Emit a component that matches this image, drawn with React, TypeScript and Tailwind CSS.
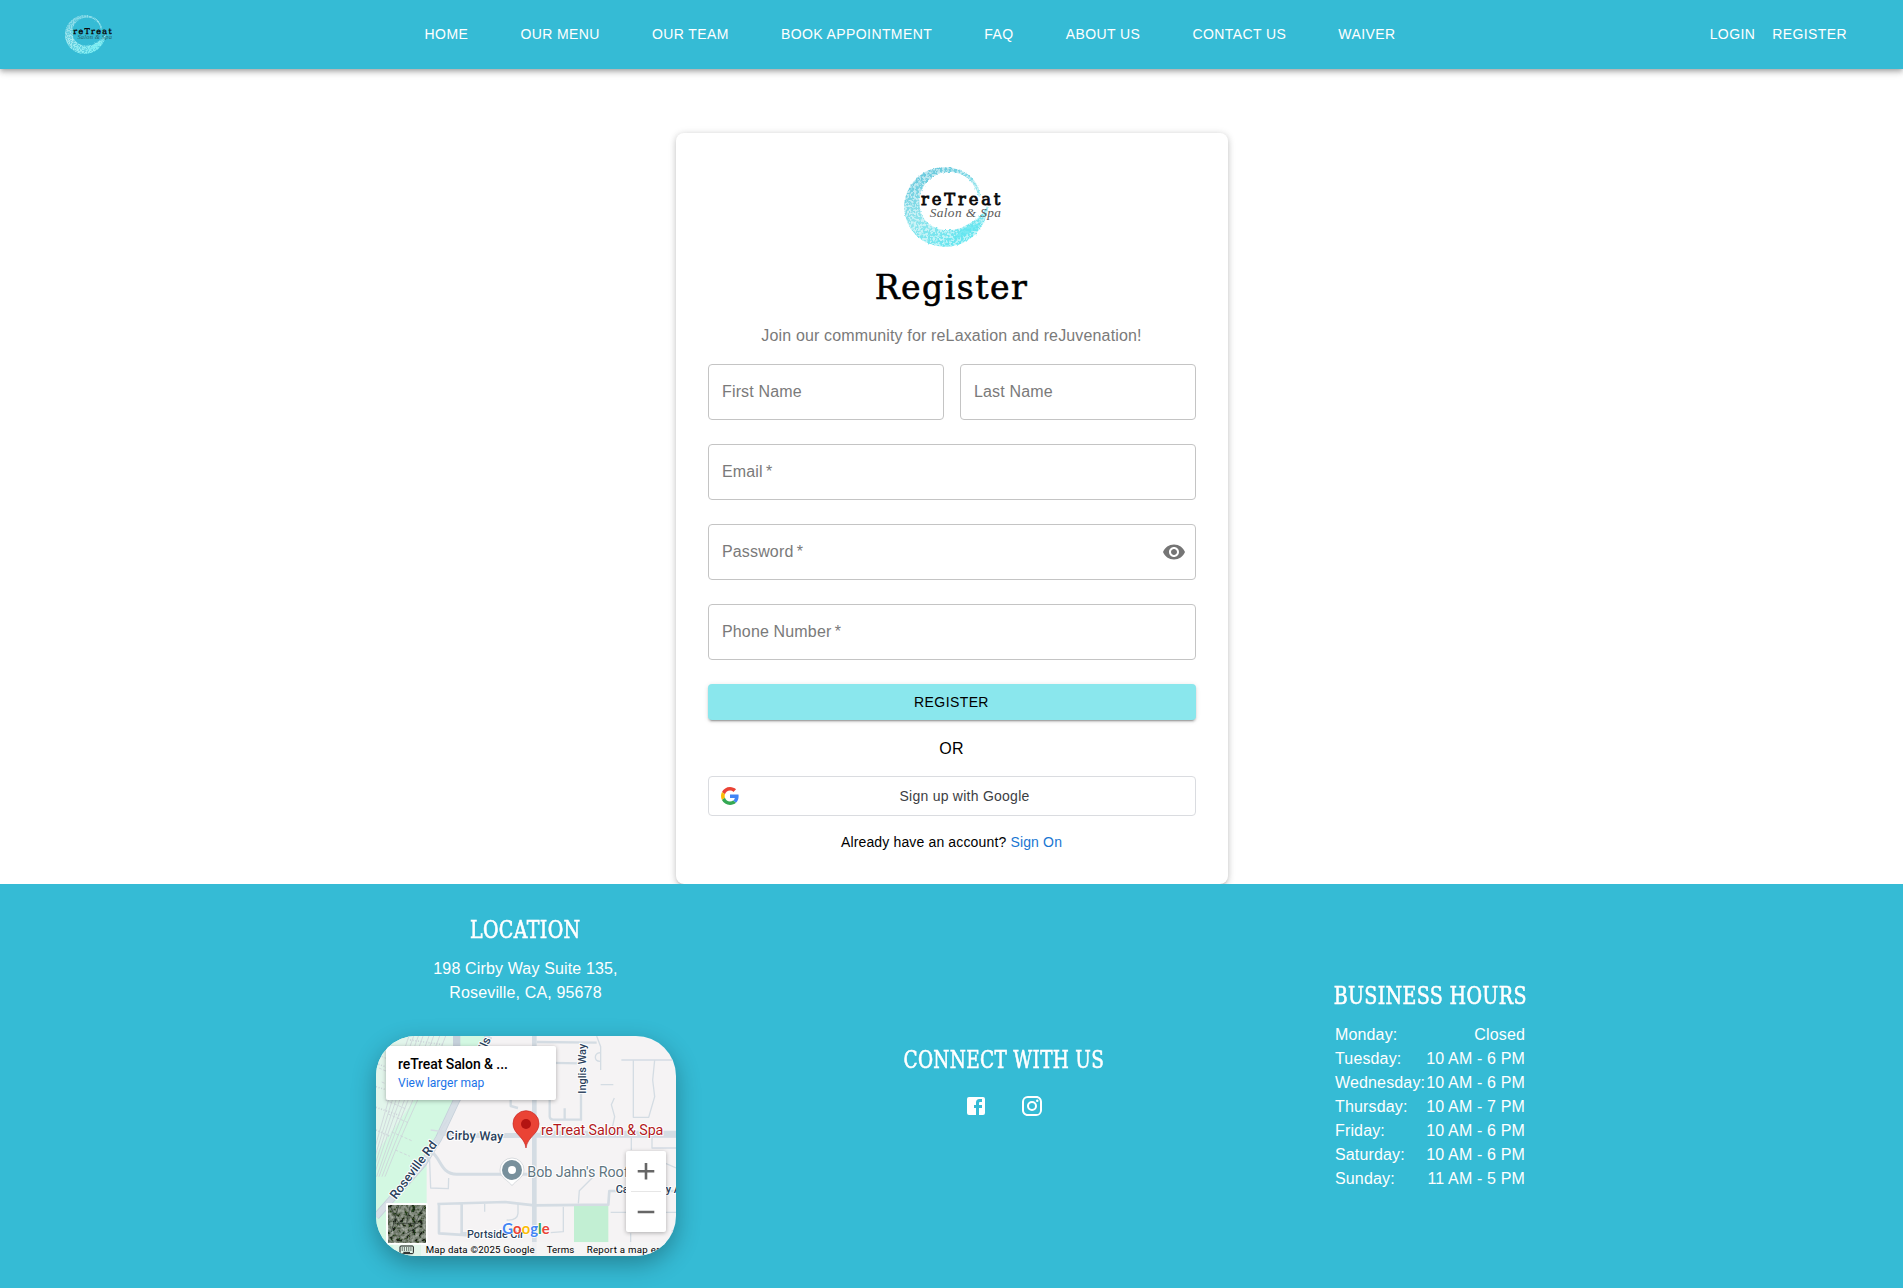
import React from "react";
import { MdVisibility } from "react-icons/md";

const NAV_LINKS = ["HOME", "OUR MENU", "OUR TEAM", "BOOK APPOINTMENT", "FAQ", "ABOUT US", "CONTACT US", "WAIVER"];

const HOURS: [string, string][] = [
  ["Monday:", "Closed"],
  ["Tuesday:", "10 AM - 6 PM"],
  ["Wednesday:", "10 AM - 6 PM"],
  ["Thursday:", "10 AM - 7 PM"],
  ["Friday:", "10 AM - 6 PM"],
  ["Saturday:", "10 AM - 6 PM"],
  ["Sunday:", "11 AM - 5 PM"],
];

const RING =
  "M163 37C97 37 43 90 43 157c0 66 54 118 120 118 58 0 104-32 124-86 6-14 7-26 5-38-6 16-14 24-22 32-18 18-34 22-46 30-14 10-30 12-46 12-54 2-88-32-90-78-2-56 40-96 88-96 42 0 76 22 90 74h5C268 74 222 37 163 37Z";

function Logo({ id, className, light = false }: { id: string; className: string; light?: boolean }) {
  const from = light ? "#7fd6e6" : "#62c4da";
  const mid = light ? "#a5eaf0" : "#8fe4ec";
  const to = light ? "#7ff0f4" : "#62e6f0";
  return (
    <svg viewBox="42 36 291 240" className={className} role="img" aria-label="reTreat Salon & Spa">
      <defs>
        <linearGradient id={`${id}-g`} x1="0.2" y1="0" x2="0.7" y2="1">
          <stop offset="0" stopColor={from} />
          <stop offset="0.5" stopColor={mid} />
          <stop offset="1" stopColor={to} />
        </linearGradient>
        <filter id={`${id}-f`} x="-5%" y="-5%" width="110%" height="110%">
          <feTurbulence type="fractalNoise" baseFrequency="0.14" numOctaves="3" seed="4" result="n" />
          <feColorMatrix in="n" type="matrix" values="0 0 0 0 0  0 0 0 0 0  0 0 0 0 0  0 0 0 -6 3.6" result="holes" />
          <feDisplacementMap in="SourceGraphic" in2="n" scale="12" xChannelSelector="R" yChannelSelector="G" result="d" />
          <feComposite in="d" in2="holes" operator="in" />
        </filter>
      </defs>
      <path d={RING} fill={`url(#${id}-g)`} opacity="0.45" />
      <path d={RING} fill={`url(#${id}-g)`} filter={`url(#${id}-f)`} />
      <path d="M190 254c34-8 68-28 88-56-12 8-28 12-40 14-20 6-38 24-48 42Z" fill={to} opacity="0.75" />
      <text x="93" y="150" textLength="238" lengthAdjust="spacing" fontSize="49" stroke="#0a0a0a" strokeWidth="2.5" fill="#0a0a0a" fontFamily="'DejaVu Serif', serif">
        reTreat
      </text>
      <text x="119" y="185" textLength="214" lengthAdjust="spacing" fontSize="40" fontStyle="italic" fill={light ? "#24606c" : "#5a5a5a"} fontFamily="'Liberation Serif', serif">
        Salon &amp; Spa
      </text>
    </svg>
  );
}

function Field({ label, required = false, children }: { label: string; required?: boolean; children?: React.ReactNode }) {
  return (
    <div className="flex h-14 w-full items-center justify-between rounded border border-[#c4c4c4] pl-[13.5px] pr-[9px] text-base text-[#7a7a7a]">
      <span className="tracking-[0.15px]">
        {label}
        {required && <span>&thinsp;*</span>}
      </span>
      {children}
    </div>
  );
}

function GoogleG() {
  return (
    <svg viewBox="0 0 48 48" className="size-[18px]">
      <path fill="#EA4335" d="M24 9.5c3.54 0 6.71 1.22 9.21 3.6l6.85-6.85C35.9 2.38 30.47 0 24 0 14.62 0 6.51 5.38 2.56 13.22l7.98 6.19C12.43 13.72 17.74 9.5 24 9.5z" />
      <path fill="#4285F4" d="M46.98 24.55c0-1.57-.15-3.09-.38-4.55H24v9.02h12.94c-.58 2.96-2.26 5.48-4.78 7.18l7.73 6c4.51-4.18 7.09-10.36 7.09-17.65z" />
      <path fill="#FBBC05" d="M10.53 28.59c-.48-1.45-.76-2.99-.76-4.59s.27-3.14.76-4.59l-7.98-6.19C.92 16.46 0 20.12 0 24c0 3.88.92 7.54 2.56 10.78l7.97-6.19z" />
      <path fill="#34A853" d="M24 48c6.48 0 11.93-2.13 15.89-5.81l-7.73-6c-2.15 1.45-4.92 2.3-8.16 2.3-6.26 0-11.57-4.22-13.47-9.91l-7.98 6.19C6.51 42.62 14.62 48 24 48z" />
    </svg>
  );
}

const TRACKS = [0, 14, 28, 42, 60, 74, 92, 110];

function MapDrawing() {
  return (
    <svg viewBox="48 48 900 660" className="h-[220px] w-[300px] tracking-normal" fontFamily="Roboto, sans-serif">
      <defs>
        <filter id="trees" x="0" y="0" width="100%" height="100%">
          <feTurbulence type="fractalNoise" baseFrequency="0.09" numOctaves="3" seed="8" />
          <feColorMatrix type="matrix" values="1.5 0 0 0 -0.47  1.5 0 0 0 -0.43  1.5 0 0 0 -0.49  0 0 0 0 1" />
        </filter>
        <clipPath id="rail">
          <path d="M48 48H300L200 330 130 440 48 570Z" />
        </clipPath>
      </defs>
      <rect x="48" y="48" width="900" height="660" fill="#f5f3f4" />
      <path d="M48 48H385L290 240 200 400V708H48Z" fill="#d3f8e2" />
      <path d="M48 48H300L120 300 48 400Z" fill="#ecf3f1" opacity="0.6" />
      <g clipPath="url(#rail)" stroke="#ccd2d8" strokeWidth="2.5" fill="none">
        {TRACKS.map((t) => (
          <path key={t} d={`M${150 + t} 40C${110 + t} 150 ${80 + t * 0.7} 260 ${20 + t * 0.5} 470`} />
        ))}
        {TRACKS.map((t) => (
          <path key={`d${t}`} d={`M${40 + t * 0.6} ${60 + t * 3}l60 26`} strokeDasharray="9 5" />
        ))}
        <path d="M150 60l100 14M140 90l90 16M48 130l60 22M48 200l80 24M48 262l70 24M48 330l40 18" strokeWidth="5" strokeDasharray="3 5" />
      </g>
      <path d="M290 48V100M386 48L290 240 236 355 190 430 48 590" fill="none" stroke="#c5d0da" strokeWidth="22" />
      <path d="M386 48L290 240 236 355 190 430 48 590" fill="none" stroke="#d7dfe6" strokeWidth="17" />
      <g fill="none" stroke="#d4dce3" strokeLinejoin="round">
        <path d="M523 48V708" strokeWidth="14" />
        <path d="M240 338C330 350 400 346 523 346H948" strokeWidth="15" />
        <path d="M540 342H948" strokeWidth="20" />
        <path d="M218 398C244 420 244 462 290 463H523" strokeWidth="9" />
        <path d="M232 552L436 546 523 556 745 554 748 513H948M237 552V640L330 646M305 552V640H430" strokeWidth="8" />
        <path d="M530 66L710 68M530 128L665 130M569 240V290Q570 299 580 299H663V215M452 240V258L474 264M614 265V299" strokeWidth="7" />
        <path d="M710 48L722 80V150M720 98q-14 2-14 14t14 12M784 120H948M884 120L878 180 884 230 866 292 820 292V120M722 194H760M763 234L754 254 764 290 752 346M814 350V390M876 350V384H948M876 412L948 444M655 550L658 512 700 470M752 577H948M812 640V708M937 630V708M610 560V635L572 638M374 552V575M474 552V580Q472 602 440 600M208 400L212 504 265 506 266 474M212 330L270 338M262 300L236 340" strokeWidth="4" />
      </g>
      <rect x="642" y="558" width="103" height="109" fill="#c2efd3" />

      <g fontWeight="500" fill="#2b3f5c" stroke="#fff" strokeWidth="6" paintOrder="stroke" strokeLinejoin="round">
        <text transform="translate(378 92) rotate(-66)" fontSize="36">lls</text>
        <text transform="translate(677 221) rotate(-90)" fontSize="33" textLength="150">Inglis Way</text>
        <text transform="translate(258 359) rotate(1)" fontSize="38" textLength="172">Cirby Way</text>
        <text transform="translate(108 540) rotate(-53)" fontSize="38" textLength="207">Roseville Rd</text>
        <text x="321" y="653" fontSize="33" textLength="171">Portside Cir</text>
        <text x="767" y="520" fontSize="33">Ca</text>
        <text x="917" y="520" fontSize="33">y A</text>
      </g>
      <g stroke="#fff" strokeWidth="6" paintOrder="stroke" strokeLinejoin="round">
        <text x="543" y="346" fontSize="43" textLength="367" fill="#b3191c">reTreat Salon &amp; Spa</text>
        <text x="502" y="472" fontSize="43" textLength="304" fill="#607580">Bob Jahn&#39;s Roof</text>
      </g>

      <path d="M456 497C446 482 420 474 420 450a36 36 0 0 1 72 0c0 24-26 32-36 47Z" fill="#fff" stroke="#c9cdd1" strokeWidth="2" />
      <circle cx="456" cy="450" r="30" fill="#78909c" />
      <circle cx="456" cy="450" r="12" fill="#fff" />
      <path d="M498 384C494 350 459 342 459 311a39 39 0 0 1 78 0c0 31-35 39-39 73Z" fill="#ea4335" stroke="#c5221f" strokeWidth="2" />
      <circle cx="498" cy="312" r="15" fill="#b31412" />

      <g fontSize="48" stroke="#fff" strokeWidth="4" paintOrder="stroke" fontFamily="Lato, sans-serif">
        <text x="427" y="643" textLength="142" lengthAdjust="spacingAndGlyphs" fontWeight="700">
          <tspan fill="#4285f4">G</tspan><tspan fill="#ea4335">o</tspan><tspan fill="#fbbc04">o</tspan><tspan fill="#4285f4">g</tspan><tspan fill="#34a853">l</tspan><tspan fill="#ea4335">e</tspan>
        </text>
      </g>

      <rect x="182" y="666" width="766" height="42" fill="#f5f5f5" opacity="0.8" />
      <rect x="100" y="666" width="82" height="42" fill="#e6f5ec" opacity="0.8" />
      <rect x="78" y="549" width="125" height="125" rx="4" fill="#fff" />
      <rect x="84" y="555" width="114" height="113" filter="url(#trees)" />
      <rect x="84" y="555" width="114" height="113" fill="#4c5646" opacity="0.4" />
      <path d="M90 558l30 60M116 556l-22 80M150 560l-10 50M190 562l-30 60M104 610h70M140 640l50-30" stroke="#1f2a22" strokeWidth="3" opacity="0.6" />

      <rect x="120" y="678" width="40" height="23" rx="3" fill="none" stroke="#111" strokeWidth="3" />
      <path d="M125 684h32M125 690h32" stroke="#111" strokeWidth="3" strokeDasharray="3.5 3" />
      <path d="M130 697h20" stroke="#111" strokeWidth="3" />
      <g fontSize="29" fill="#000">
        <text x="197" y="699" textLength="327">Map data ©2025 Google</text>
        <text x="560" y="699" textLength="83">Terms</text>
        <text x="680" y="699" textLength="257">Report a map error</text>
      </g>
    </svg>
  );
}

function LocationMap() {
  return (
    <div className="relative h-[220px] w-[300px] overflow-hidden rounded-[40px] shadow-[0_8px_24px_rgba(0,0,0,0.3)]">
      <MapDrawing />
      <div className="absolute left-[10px] top-[10px] h-[54px] w-[170px] rounded-[2px] bg-white pl-[12.5px] pt-[9px] font-[Roboto,sans-serif] tracking-normal shadow-[0_1px_4px_rgba(0,0,0,0.3)]">
        <div className="text-[14px] font-medium leading-[18px] tracking-[-0.08px] text-black">reTreat Salon &amp; ...</div>
        <div className="pt-px text-[12px] leading-[19px] text-[#1a73e8]">View larger map</div>
      </div>
      <div className="absolute left-[250px] top-[115px] flex h-[81px] w-10 flex-col items-center rounded-[2px] bg-white shadow-[0_1px_4px_rgba(0,0,0,0.3)]">
        <svg viewBox="0 0 40 40" className="size-10" fill="#666">
          <path d="M18.7 12h2.6v7h7v2.6h-7v7h-2.6v-7h-7V19h7z" />
        </svg>
        <div className="h-px w-[30px] bg-[#e6e6e6]" />
        <svg viewBox="0 0 40 40" className="size-10" fill="#666">
          <path d="M11.7 18.7h16.6v2.6H11.7z" />
        </svg>
      </div>
    </div>
  );
}

function FooterHeading({ children, className }: { children: React.ReactNode; className: string }) {
  return (
    <h2 className={`flex h-8 items-center justify-center whitespace-nowrap font-['DejaVu_Serif',serif] text-[23.5px] leading-8 tracking-[0.4px] [-webkit-text-stroke:0.6px_white] ${className}`}>
      {children}
    </h2>
  );
}

export default function App() {
  return (
    <div className="flex h-[1288px] flex-col overflow-hidden bg-white font-['Liberation_Sans',Arial,sans-serif] text-black">
      <header className="relative z-10 flex h-[69px] shrink-0 items-center bg-[#35bbd5] pb-px text-[14px] tracking-[0.4px] text-white shadow-[0_2px_4px_-1px_rgba(0,0,0,0.2),0_4px_5px_rgba(0,0,0,0.14),0_1px_10px_rgba(0,0,0,0.12)]">
        <Logo id="nav" light className="ml-[65px] h-[39px] w-[47px]" />
        <nav className="ml-[312.6px] flex gap-[52.2px]">
          {NAV_LINKS.map((l) => (
            <a key={l} className="whitespace-nowrap">{l}</a>
          ))}
        </nav>
        <div className="ml-auto mr-14 flex gap-[17px]">
          <a>LOGIN</a>
          <a>REGISTER</a>
        </div>
      </header>

      <main className="flex h-[815px] shrink-0 justify-center pt-16">
        <section className="flex h-[751px] w-[552px] flex-col items-center rounded-lg bg-white px-8 pt-[34px] shadow-[0_3px_3px_-2px_rgba(0,0,0,0.2),0_2px_6px_rgba(0,0,0,0.14),0_1px_8px_rgba(0,0,0,0.12)]">
          <Logo id="card" className="ml-[2px] h-20 w-[97px]" />
          <h1 className="mt-5 h-[42px] font-['DejaVu_Serif',serif] text-[33px] leading-[42px] tracking-[1.5px] [-webkit-text-stroke:0.6px_black]">Register</h1>
          <p className="mt-[15px] h-6 text-base tracking-[0.15px] text-[#7a7a7a]">Join our community for reLaxation and reJuvenation!</p>
          <form className="mt-4 flex w-full flex-col gap-6">
            <div className="flex gap-4">
              <Field label="First Name" />
              <Field label="Last Name" />
            </div>
            <Field label="Email" required />
            <Field label="Password" required>
              <MdVisibility className="size-6 text-[#757575]" />
            </Field>
            <Field label="Phone Number" required />
            <button type="button" className="h-9 rounded bg-[#8ae7ed] text-[14px] tracking-[0.4px] shadow-[0_3px_1px_-2px_rgba(0,0,0,0.2),0_2px_2px_rgba(0,0,0,0.14),0_1px_5px_rgba(0,0,0,0.12)]">
              REGISTER
            </button>
          </form>
          <div className="mt-[17px] h-6 text-base tracking-[0.15px]">OR</div>
          <button type="button" className="mt-[15px] flex h-10 w-full items-center rounded border border-[#dadce0] px-3 text-[14px] tracking-[0.25px] text-[#3c4043]">
            <GoogleG />
            <span className="grow pl-2">Sign up with Google</span>
          </button>
          <p className="mt-4 text-[14px] leading-5 tracking-[0.15px]">
            Already have an account? <a className="text-[#1976d2]">Sign On</a>
          </p>
        </section>
      </main>

      <footer className="relative flex h-[404px] shrink-0 justify-center bg-[#35bbd5] text-base tracking-[0.15px] text-white">
        <div className="flex w-[1152px] items-center justify-between">
          <div className="flex w-[300px] flex-col items-center">
            <FooterHeading className="scale-x-[0.81]">LOCATION</FooterHeading>
            <p className="mt-[11px] text-center leading-6">
              198 Cirby Way Suite 135,
              <br />
              Roseville, CA, 95678
            </p>
            <div className="mt-[31px] mb-[3px]">
              <LocationMap />
            </div>
          </div>
          <div className="flex w-[202px] flex-col items-center">
            <FooterHeading className="scale-x-[0.785]">CONNECT WITH US</FooterHeading>
            <div className="mt-[18px] mb-[10px] flex gap-8">
              <svg viewBox="0 0 24 24" className="size-6" fill="currentColor">
                <path d="M5 3h14a2 2 0 0 1 2 2v14a2 2 0 0 1-2 2H5a2 2 0 0 1-2-2V5a2 2 0 0 1 2-2m13 2h-2.5A3.5 3.5 0 0 0 12 8.5V11h-2v3h2v7h3v-7h3v-3h-3V9a1 1 0 0 1 1-1h2V5z" />
              </svg>
              <svg viewBox="0 0 24 24" className="size-6" fill="currentColor">
                <path d="M7.8 2h8.4C19.4 2 22 4.6 22 7.8v8.4a5.8 5.8 0 0 1-5.8 5.8H7.8C4.6 22 2 19.4 2 16.2V7.8A5.8 5.8 0 0 1 7.8 2m-.2 2A3.6 3.6 0 0 0 4 7.6v8.8C4 18.39 5.61 20 7.6 20h8.8a3.6 3.6 0 0 0 3.6-3.6V7.6C20 5.61 18.39 4 16.4 4H7.6m9.65 1.5a1.25 1.25 0 0 1 1.25 1.25A1.25 1.25 0 0 1 17.25 8 1.25 1.25 0 0 1 16 6.75a1.25 1.25 0 0 1 1.25-1.25M12 7a5 5 0 0 1 5 5 5 5 0 0 1-5 5 5 5 0 0 1-5-5 5 5 0 0 1 5-5m0 2a3 3 0 0 0-3 3 3 3 0 0 0 3 3 3 3 0 0 0 3-3 3 3 0 0 0-3-3z" />
              </svg>
            </div>
          </div>
          <div className="mb-[2px] flex w-[195px] flex-col items-center">
            <FooterHeading className="scale-x-[0.81]">BUSINESS HOURS</FooterHeading>
            <div className="mt-[11px] w-[190px]">
              {HOURS.map(([day, time]) => (
                <div key={day} className="flex justify-between whitespace-nowrap leading-6">
                  <span>{day}</span>
                  <span>{time}</span>
                </div>
              ))}
            </div>
          </div>
        </div>
      </footer>
    </div>
  );
}
